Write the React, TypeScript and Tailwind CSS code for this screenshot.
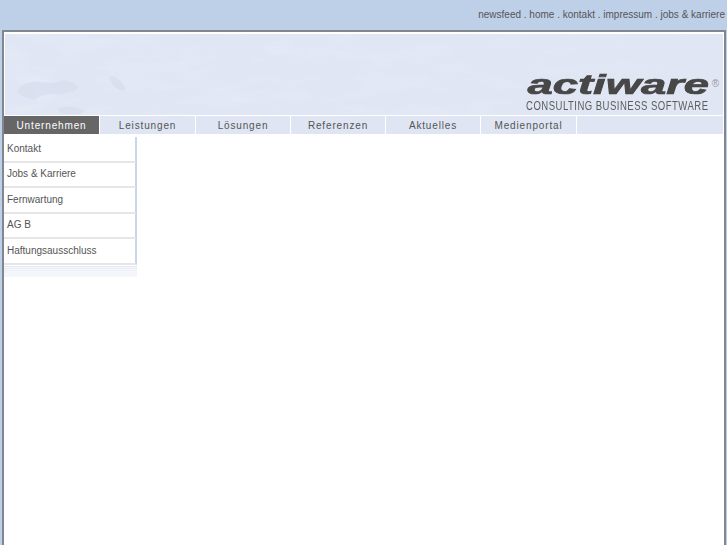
const tabs = [
  { label: "Unternehmen", w: "w-[95px]", active: true },
  { label: "Leistungen", w: "w-[95px]" },
  { label: "Lösungen", w: "w-[94px]" },
  { label: "Referenzen", w: "w-[94px]" },
  { label: "Aktuelles", w: "w-[94px]" },
  { label: "Medienportal", w: "w-[95px]" },
];

const side = ["Kontakt", "Jobs & Karriere", "Fernwartung", "AG B", "Haftungsausschluss"];

function Texture() {
  return (
    <svg className="absolute inset-0 h-full w-full" viewBox="0 0 718 81" preserveAspectRatio="none">
      <defs>
        <filter id="cloud" x="0" y="0" width="100%" height="100%">
          <feTurbulence type="fractalNoise" baseFrequency="0.02 0.07" numOctaves="4" seed="7" />
          <feColorMatrix values="0 0 0 0 0.98  0 0 0 0 0.99  0 0 0 0 1  0 0 0 1.6 -0.7" />
        </filter>
        <linearGradient id="fade" x1="0" x2="1" y1="0" y2="0">
          <stop offset="0" stopColor="#fff" stopOpacity="1" />
          <stop offset="0.7" stopColor="#fff" stopOpacity="0.6" />
          <stop offset="1" stopColor="#fff" stopOpacity="0" />
        </linearGradient>
        <mask id="fadeMask">
          <rect width="718" height="81" fill="url(#fade)" />
        </mask>
      </defs>
      <rect width="718" height="81" filter="url(#cloud)" opacity="0.25" mask="url(#fadeMask)" />
      <g fill="#d6ddef" opacity="0.6">
        <path d="M16 52 Q26 46 38 48 T58 46 Q70 48 74 54 Q66 60 50 60 T30 66 Q18 64 12 58 Z" />
        <path d="M104 42 Q112 42 118 50 T114 56 Q106 52 104 42 Z" />
        <path d="M52 74 Q66 70 80 76 L76 80 L56 80 Z" />
      </g>
    </svg>
  );
}

export default function App() {
  return (
    <div className="h-[545px] w-[727px] overflow-hidden bg-[#bdd0e8] font-['Liberation_Sans',Arial,sans-serif]">
      <div className="flex h-[30px] items-center justify-end pr-[2px] pb-[2px] text-[10px] text-[#555]">
        newsfeed . home . kontakt . impressum . jobs &amp; karriere
      </div>
      <div className="ml-[2px] h-[515px] w-[724px] border-2 border-b-0 border-[#82868e] bg-white pt-[2px] pr-[1px]">
        <div className="relative ml-[1px] flex h-[81px] flex-col items-end justify-end overflow-hidden bg-[#e0e6f4] pr-[4px] pb-[3px]">
          <Texture />
          <div className="relative flex items-start">
            <span className="mr-[1px] origin-right scale-x-[1.68] whitespace-nowrap text-[27px] leading-[27px] font-bold italic text-[#474747] [-webkit-text-stroke:0.7px_#474747]">
              actiware
            </span>
            <span className="mt-[7px] ml-[2px] text-[10px] leading-[10px] text-[#999]">®</span>
          </div>
          <div className="relative mt-[1px] mr-[11px] origin-right scale-x-[0.795] whitespace-nowrap text-[12px] leading-[12px] tracking-[0.6px] text-[#5c5c5c]">
            CONSULTING BUSINESS SOFTWARE
          </div>
        </div>
        <div className="mt-[1px] flex h-[18px] gap-px bg-white">
          {tabs.map((t) => (
            <div
              key={t.label}
              className={`flex ${t.w} items-center justify-center text-[10px] tracking-[0.85px] ${t.active ? "bg-[#666] text-white" : "bg-[#dfe5f3] text-[#555]"}`}
            >
              {t.label}
            </div>
          ))}
          <div className="flex-1 bg-[#dfe5f3]" />
        </div>
        <div className="mt-[3px] w-[133px]">
          {side.map((s) => (
            <div key={s} className="flex h-[25.5px] items-center border-r-2 border-b-2 border-r-[#c8d6ea] border-b-[#e6e6e6] pb-px pl-[3px] text-[10px] text-[#555]">
              {s}
            </div>
          ))}
          <div className="mt-[1px] flex h-[11px] flex-col gap-px bg-[#f3f6fb]">
            <div className="h-px bg-[#e2e9f4]" />
            <div className="h-px bg-[#e8edf6]" />
            <div className="h-px bg-[#eef2f8]" />
          </div>
        </div>
      </div>
    </div>
  );
}
